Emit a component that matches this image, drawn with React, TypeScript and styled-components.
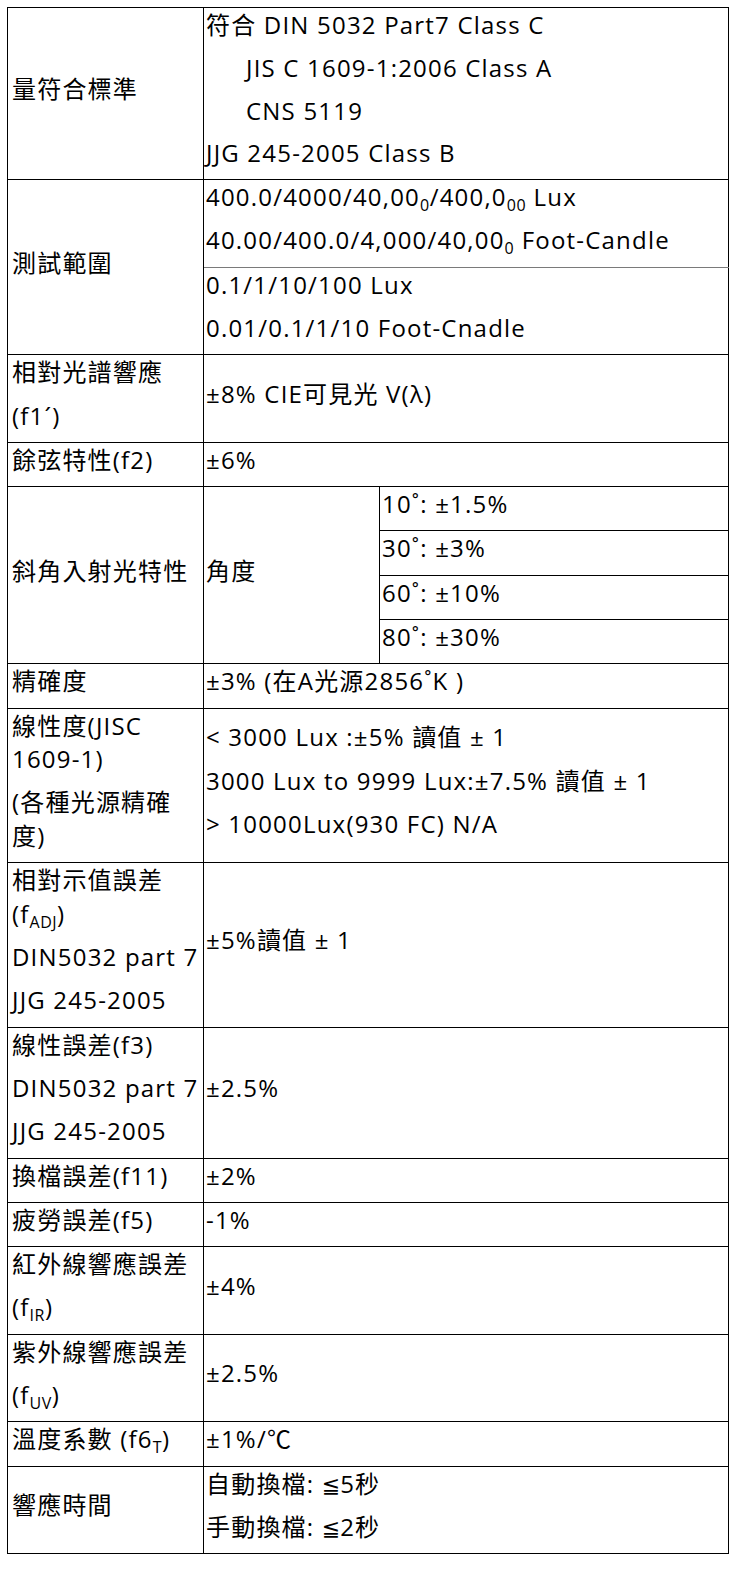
import { FC, ReactNode } from "react";
import styled, { createGlobalStyle } from "styled-components";

const GlobalStyle = createGlobalStyle`
  body {
    margin: 0;
    background: #fff;
  }
`;

const Page = styled.div`
  padding: 7px 0 0 7px;
`;

const SpecTable = styled.table`
  border-collapse: collapse;
  table-layout: fixed;
  width: 721px;
  font-family: "Open Sans", "Noto Sans CJK TC", sans-serif;
  font-size: 24px;
  letter-spacing: 1.2px;
  color: #000;
`;

const Col = styled.col<{ $w: number }>`
  width: ${(p) => p.$w}px;
`;

const Cell = styled.td<{ $split?: boolean; $below?: boolean }>`
  border: 1px solid #000;
  ${(p) => p.$split && "border-bottom-color: #7a7a7a;"}
  ${(p) => p.$below && "border-top-color: #7a7a7a;"}
  padding: 0 4px 0 2px;
  vertical-align: middle;
`;

const LabelCell = styled(Cell)`
  padding: 0 2px 0 4px;
`;

const Line = styled.p<{ $indent?: boolean; $tight?: boolean }>`
  margin: 0 0 ${(p) => (p.$tight ? "9.2px" : "9.7px")};
  line-height: 33.6px;
  padding-left: ${(p) => (p.$indent ? "40px" : "0")};
`;

const Sub = styled.sub`
  font-size: 16px;
  line-height: 0;
  vertical-align: -5px;
  letter-spacing: 0.5px;
`;

// narrow math glyph, the CJK font draws it full width
const Sym = styled.span`
  font-family: "DejaVu Sans", "Noto Sans CJK TC", sans-serif;
  font-size: 22px;
  line-height: 0;
  letter-spacing: 0;
`;

type RowProps = { label: ReactNode; children: ReactNode };

const SimpleRow: FC<RowProps> = ({ label, children }) => (
  <tr>
    <LabelCell>{label}</LabelCell>
    <Cell colSpan={2}>{children}</Cell>
  </tr>
);

const angles = ["10˚: ±1.5%", "30˚: ±3%", "60˚: ±10%", "80˚: ±30%"];

const App: FC = () => {
  return (
    <Page>
      <GlobalStyle />
      <SpecTable>
        <colgroup>
          <Col $w={196} />
          <Col $w={176} />
          <Col $w={349} />
        </colgroup>
        <tbody>
          <SimpleRow label={<Line>量符合標準</Line>}>
            <Line $tight>符合 DIN 5032 Part7 Class C</Line>
            <Line $tight $indent>
              JIS C 1609-1:2006 Class A
            </Line>
            <Line $tight $indent>
              CNS 5119
            </Line>
            <Line $tight>JJG 245-2005 Class B</Line>
          </SimpleRow>

          <tr>
            <LabelCell rowSpan={2}>
              <Line>測試範圍</Line>
            </LabelCell>
            <Cell colSpan={2} $split>
              <Line>
                400.0/4000/40,00<Sub>0</Sub>/400,0<Sub>00</Sub> Lux
              </Line>
              <Line>
                40.00/400.0/4,000/40,00<Sub>0</Sub> Foot-Candle
              </Line>
            </Cell>
          </tr>
          <tr>
            <Cell colSpan={2} $below>
              <Line>0.1/1/10/100 Lux</Line>
              <Line>0.01/0.1/1/10 Foot-Cnadle</Line>
            </Cell>
          </tr>

          <SimpleRow
            label={
              <>
                <Line>相對光譜響應</Line>
                <Line>(f1´)</Line>
              </>
            }
          >
            <Line>±8% CIE可見光 V(λ)</Line>
          </SimpleRow>

          <SimpleRow label={<Line>餘弦特性(f2)</Line>}>
            <Line>±6%</Line>
          </SimpleRow>

          {angles.map((a, i) => (
            <tr key={a}>
              {i === 0 && (
                <>
                  <LabelCell rowSpan={4}>
                    <Line>斜角入射光特性</Line>
                  </LabelCell>
                  <Cell rowSpan={4}>
                    <Line>角度</Line>
                  </Cell>
                </>
              )}
              <Cell>
                <Line>{a}</Line>
              </Cell>
            </tr>
          ))}

          <SimpleRow label={<Line>精確度</Line>}>
            <Line>±3% (在A光源2856˚K )</Line>
          </SimpleRow>

          <SimpleRow
            label={
              <>
                <Line>線性度(JISC 1609-1)</Line>
                <Line>(各種光源精確度)</Line>
              </>
            }
          >
            <Line>&lt; 3000 Lux :±5% 讀值 ± 1</Line>
            <Line>3000 Lux to 9999 Lux:±7.5% 讀值 ± 1</Line>
            <Line>&gt; 10000Lux(930 FC) N/A</Line>
          </SimpleRow>

          <SimpleRow
            label={
              <>
                <Line>
                  相對示值誤差(f<Sub>ADJ</Sub>)
                </Line>
                <Line>DIN5032 part 7</Line>
                <Line>JJG 245-2005</Line>
              </>
            }
          >
            <Line>±5%讀值 ± 1</Line>
          </SimpleRow>

          <SimpleRow
            label={
              <>
                <Line>線性誤差(f3)</Line>
                <Line>DIN5032 part 7</Line>
                <Line>JJG 245-2005</Line>
              </>
            }
          >
            <Line>±2.5%</Line>
          </SimpleRow>

          <SimpleRow label={<Line>換檔誤差(f11)</Line>}>
            <Line>±2%</Line>
          </SimpleRow>

          <SimpleRow label={<Line>疲勞誤差(f5)</Line>}>
            <Line>-1%</Line>
          </SimpleRow>

          <SimpleRow
            label={
              <>
                <Line>紅外線響應誤差</Line>
                <Line>
                  (f<Sub>IR</Sub>)
                </Line>
              </>
            }
          >
            <Line>±4%</Line>
          </SimpleRow>

          <SimpleRow
            label={
              <>
                <Line>紫外線響應誤差</Line>
                <Line>
                  (f<Sub>UV</Sub>)
                </Line>
              </>
            }
          >
            <Line>±2.5%</Line>
          </SimpleRow>

          <SimpleRow
            label={
              <Line>
                溫度系數 (f6<Sub>T</Sub>)
              </Line>
            }
          >
            <Line>±1%/℃</Line>
          </SimpleRow>

          <SimpleRow label={<Line>響應時間</Line>}>
            <Line>
              自動換檔: <Sym>≦</Sym>5秒
            </Line>
            <Line>
              手動換檔: <Sym>≦</Sym>2秒
            </Line>
          </SimpleRow>
        </tbody>
      </SpecTable>
    </Page>
  );
};

export default App;
